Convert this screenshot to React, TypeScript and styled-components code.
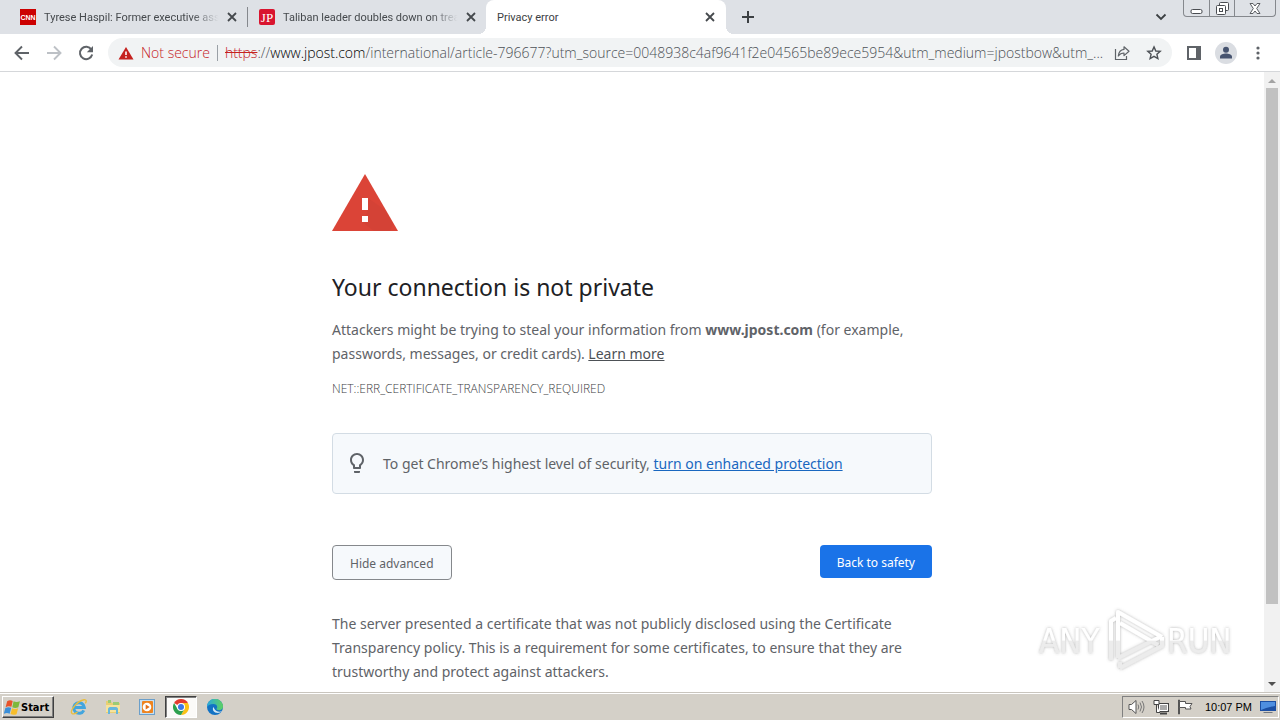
import React from "react";
import styled, { createGlobalStyle, css } from "styled-components";

const GlobalStyle = createGlobalStyle`
  * { box-sizing: border-box; }
  body { margin: 0; background: #fff; font-family: "Noto Sans", "Open Sans", sans-serif; }
  button { font-family: inherit; cursor: pointer; }
  svg { display: block; flex: none; }
`;

const Desktop = styled.div`
  display: flex;
  flex-direction: column;
  height: 100vh;
  overflow: hidden;
`;

const TabStrip = styled.header`
  display: flex;
  align-items: stretch;
  height: 34px;
  flex: none;
  background: #dee1e6;
  padding-left: 8px;
`;

const Tab = styled.div<{ $active?: boolean; $divided?: boolean }>`
  position: relative;
  display: flex;
  align-items: center;
  width: 239px;
  padding: 0 9px 0 12px;
  gap: 8px;
  font-family: Roboto, sans-serif;
  font-size: 11px;
  color: #45494d;
  ${(p) =>
    p.$divided &&
    css`
      &::after {
        content: "";
        position: absolute;
        right: -1px;
        top: 7px;
        width: 1px;
        height: 20px;
        background: #85888d;
      }
    `}
  ${(p) =>
    p.$active &&
    css`
      width: 240px;
      padding: 0 10px 0 11px;
      background: #fff;
      border-radius: 8px 8px 0 0;
      color: #3c4043;
      &::before,
      &::after {
        content: "";
        position: absolute;
        bottom: 0;
        width: 8px;
        height: 8px;
      }
      &::before {
        left: -8px;
        background: radial-gradient(circle at 0 0, #dee1e6 8px, #fff 8px);
      }
      &::after {
        right: -8px;
        background: radial-gradient(circle at 100% 0, #dee1e6 8px, #fff 8px);
      }
    `}
`;

const TabTitle = styled.span<{ $fade?: boolean }>`
  flex: 1;
  margin-right: -6px;
  white-space: nowrap;
  ${(p) => p.$fade && css`mask-image: linear-gradient(to right, #000 82%, transparent 97%);`}
`;

const IconButton = styled.button<{ $size?: number }>`
  display: flex;
  align-items: center;
  justify-content: center;
  flex: none;
  width: ${(p) => p.$size ?? 32}px;
  height: ${(p) => p.$size ?? 32}px;
  padding: 0;
  border: 0;
  background: none;
`;

const NewTab = styled(IconButton)`
  align-self: center;
  margin-left: 6px;
`;

const StripEnd = styled.div`
  display: flex;
  align-items: center;
  margin-left: auto;
  padding-right: 4px;
  gap: 6px;
`;

const WindowButtons = styled.div`
  display: flex;
  align-self: flex-start;
  height: 17px;
  border: 1px solid #85888d;
  border-top: 0;
  border-radius: 0 0 4px 4px;
`;

const WindowButton = styled.button<{ $wide?: boolean }>`
  display: flex;
  align-items: center;
  justify-content: center;
  width: ${(p) => (p.$wide ? 41 : 25)}px;
  padding: 0;
  border: 0;
  background: none;
  & + & { border-left: 1px solid #85888d; }
`;

const Toolbar = styled.nav`
  display: flex;
  align-items: center;
  flex: none;
  height: 38px;
  padding: 0 6px;
  border-bottom: 1px solid #d5d7da;
`;

const AddressBar = styled.div`
  display: flex;
  align-items: center;
  flex: 1;
  min-width: 0;
  height: 29px;
  margin: 0 6px;
  padding: 0 2px 0 10px;
  border-radius: 15px;
  background: #f1f3f4;
  font-family: "Open Sans", sans-serif;
  font-size: 14px;
  font-weight: 300;
`;

const NotSecure = styled.button`
  display: flex;
  align-items: center;
  gap: 7px;
  flex: none;
  padding: 0;
  border: 0;
  background: none;
  font-size: 14px;
  font-weight: 300;
  color: #c5221f;
`;

const AddressDivider = styled.span`
  width: 1px;
  height: 16px;
  margin: 0 7px;
  background: #9aa0a6;
`;

const Url = styled.span`
  flex: 1;
  overflow: hidden;
  white-space: nowrap;
  color: #4d5156;
  s { color: #c5221f; }
  b { font-weight: 300; color: #000; }
`;

const Viewport = styled.div`
  position: relative;
  display: flex;
  flex: 1;
  min-height: 0;
`;

const Page = styled.main`
  flex: 1;
  min-width: 0;
  overflow: hidden;
`;

const Interstitial = styled.div`
  width: 100%;
  max-width: 600px;
  margin: 0 auto;
  padding-top: 102px;
  font-size: 14px;
  line-height: 24px;
  color: #5f6368;
`;

const Heading = styled.h1`
  margin: 40px 0 15px;
  font-size: 23px;
  font-weight: 400;
  line-height: 32px;
  color: #202124;
`;

const Paragraph = styled.p`
  margin: 0;
`;

const TextLink = styled.a<{ $blue?: boolean }>`
  color: ${(p) => (p.$blue ? "#1967c0" : "#4d5156")};
  text-decoration: underline;
`;

const ErrorCode = styled.div`
  margin-top: 14px;
  font-family: "Open Sans", sans-serif;
  font-size: 12px;
  font-weight: 300;
  line-height: 18px;
  color: #3c4043;
`;

const Promo = styled.div`
  display: flex;
  align-items: center;
  gap: 14px;
  margin-top: 35px;
  padding: 18px 12px 17px;
  border: 1px solid #d3dce4;
  border-radius: 4px;
  background: #f6f9fc;
`;

const Actions = styled.div`
  display: flex;
  align-items: flex-start;
  justify-content: space-between;
  margin: 51px 0 32px;
`;

const ActionButton = styled.button<{ $primary?: boolean }>`
  height: ${(p) => (p.$primary ? 33 : 35)}px;
  padding: 1px 17px 0;
  border: ${(p) => (p.$primary ? "0" : "1px solid #85888c")};
  border-radius: 4px;
  background: ${(p) => (p.$primary ? "#1a73e8" : "#f6f9fc")};
  color: ${(p) => (p.$primary ? "#fff" : "#5f6368")};
  font-size: 12px;
`;

const Scrollbar = styled.div`
  display: flex;
  flex-direction: column;
  align-items: center;
  width: 16px;
  flex: none;
  background: #f1f1f1;
`;

const ScrollThumb = styled.div`
  width: 12px;
  flex: 516;
  background: #c1c1c1;
`;

const ScrollTrack = styled.div`
  flex: 72;
`;

const Watermark = styled.svg`
  position: absolute;
  right: 40px;
  bottom: 18px;
  pointer-events: none;
`;

const Taskbar = styled.footer`
  display: flex;
  align-items: center;
  flex: none;
  height: 28px;
  padding: 1px 1px 0 2px;
  border-top: 1px solid #c9c5be;
  background: #d4d0c8;
  box-shadow: inset 0 1px #fff;
  font-family: "DejaVu Sans Condensed", "DejaVu Sans", sans-serif;
`;

const StartButton = styled.button`
  display: flex;
  align-items: center;
  height: 22px;
  width: 52px;
  margin-right: 9px;
  padding: 0 1px;
  border: 1px solid;
  border-color: #fff #404040 #404040 #fff;
  box-shadow: inset -1px -1px #808080;
  background: #d4d0c8;
  font-size: 11px;
  font-weight: 700;
  color: #000;
`;

const TaskButton = styled.button<{ $pressed?: boolean }>`
  display: flex;
  align-items: center;
  justify-content: center;
  width: 32px;
  height: 22px;
  margin-right: 2px;
  padding: 0;
  border: 1px solid transparent;
  background: none;
  ${(p) =>
    p.$pressed &&
    css`
      border-color: #404040 #fff #fff #404040;
      box-shadow: inset 1px 1px #808080;
      background: #fbfaf8;
    `}
`;

const Tray = styled.div`
  display: flex;
  align-items: center;
  gap: 8px;
  height: 22px;
  margin-left: auto;
  padding: 0 2px 0 5px;
  border: 1px solid;
  border-color: #808080 #fff #fff #808080;
  font-family: "Liberation Sans", sans-serif;
  font-size: 11px;
  color: #000;
`;

const Clock = styled.time`
  margin-left: 4px;
`;

const CloseGlyph = () => (
  <svg width="10" height="10" viewBox="0 0 10 10" stroke="#45494d" strokeWidth="1.8">
    <path d="M1 1l8 8M9 1L1 9" />
  </svg>
);

function Favicon({ label, color, serif }: { label: string; color: string; serif?: boolean }) {
  return (
    <svg width="16" height="16" viewBox="0 0 16 16">
      <rect width="16" height="16" rx={serif ? 2 : 0} fill={color} />
      <text
        x="8"
        y={serif ? 13 : 11}
        textAnchor="middle"
        fill="#fff"
        fontSize={serif ? 13 : 7}
        fontWeight={serif ? 400 : 700}
        fontFamily={serif ? "Liberation Serif, serif" : "Liberation Sans, sans-serif"}
      >
        {label}
      </text>
    </svg>
  );
}

const ArrowIcon = ({ forward }: { forward?: boolean }) => (
  <svg width="16" height="16" viewBox="0 0 16 16" fill="none" stroke={forward ? "#bdc1c6" : "#5f6368"} strokeWidth="1.9">
    <path d={forward ? "M1 8h13M8 1.5L14.5 8 8 14.5" : "M15 8H2M8 1.5L1.5 8 8 14.5"} />
  </svg>
);

const ReloadIcon = () => (
  <svg width="16" height="16" viewBox="0 0 16 16">
    <path d="M13.4 4.6A6.2 6.2 0 1 0 14.2 9.6" fill="none" stroke="#5f6368" strokeWidth="2" />
    <path d="M15 1v6.2H8.8z" fill="#5f6368" />
  </svg>
);

const SmallWarning = () => (
  <svg width="16" height="14" viewBox="0 0 16 14">
    <path d="M8 1l7.5 12.5H.5z" fill="#c5221f" />
    <path d="M7.2 5.5h1.6v3.6H7.2zM7.2 10.2h1.6v1.6H7.2z" fill="#fff" />
  </svg>
);

const ShareIcon = () => (
  <svg width="16" height="16" viewBox="0 0 16 16" fill="none" stroke="#5f6368" strokeWidth="1.2">
    <path d="M1.5 4v10.5h11V11" />
    <path d="M10 1.8l5 4.4-5 4.4V8C7.500 8 5.700 9 4.300 11 4.700 7.500 6.500 4.800 10 4.400z" strokeLinejoin="round" />
  </svg>
);

const StarIcon = () => (
  <svg width="16" height="16" viewBox="0 0 16 16" fill="none" stroke="#4d5156" strokeWidth="1.4">
    <path d="M8 1.900l1.800 4.100 4.400.4-3.300 2.900 1 4.300L8 11.300l-3.900 2.300 1-4.300-3.300-2.900 4.400-.4z" />
  </svg>
);

const SidePanelIcon = () => (
  <svg width="16" height="16" viewBox="0 0 16 16">
    <rect x="2" y="2" width="12" height="12" fill="none" stroke="#5f6368" strokeWidth="2" />
    <path d="M10 1h5v14h-5z" fill="#5f6368" />
  </svg>
);

const AvatarIcon = () => (
  <svg width="22" height="22" viewBox="0 0 22 22">
    <circle cx="11" cy="11" r="11" fill="#dadde2" />
    <circle cx="11" cy="7.800" r="3" fill="#46536f" />
    <path d="M5 16.500v-1.700c0-2.200 3.500-3.300 6-3.300s6 1.100 6 3.300v1.700z" fill="#46536f" />
  </svg>
);

const MenuIcon = () => (
  <svg width="4" height="14" viewBox="0 0 4 14" fill="#5f6368">
    <circle cx="2" cy="2" r="1.600" />
    <circle cx="2" cy="7" r="1.600" />
    <circle cx="2" cy="12" r="1.600" />
  </svg>
);

const BulbIcon = () => (
  <svg width="24" height="24" viewBox="0 1 24 24" fill="#5f6368">
    <path d="M9 21c0 .5.4 1 1 1h4c.6 0 1-.5 1-1v-1H9v1zm3-19C8.100 2 5 5.100 5 9c0 2.400 1.200 4.500 3 5.700V17c0 .5.4 1 1 1h6c.6 0 1-.5 1-1v-2.300c1.800-1.300 3-3.400 3-5.700 0-3.900-3.100-7-7-7zm2.900 11.100l-.9.6V16h-4v-2.300l-.9-.6C7.800 12.200 7 10.600 7 9c0-2.800 2.200-5 5-5s5 2.200 5 5c0 1.600-.8 3.200-2.100 4.100z" />
  </svg>
);

const WarningSign = () => (
  <svg width="66" height="57" viewBox="0 0 66 57" role="img" aria-label="Warning">
    <path d="M33 0l33 57H0z" fill="#db4437" />
    <path d="M36 24l17 12 8 14-3 7H42l-12-9 6-12z" fill="#c53f34" opacity=".3" />
    <path d="M30 24h6v12h-6zM30 42h6v6h-6z" fill="#fff" />
  </svg>
);

const ScrollArrow = ({ down }: { down?: boolean }) => (
  <svg width="16" height="16" viewBox="0 0 16 16">
    <path d={down ? "M4 6h8l-4 4z" : "M4 11h8L8 7z"} fill={down ? "#505050" : "#a3a3a3"} />
  </svg>
);

const AnyRunLogo = () => (
  <Watermark width="204" height="68" viewBox="0 0 204 68" role="img" aria-label="ANY RUN">
    <defs>
      <filter id="glow" x="-10%" y="-10%" width="120%" height="120%">
        <feDropShadow dx="0" dy="0" stdDeviation="1.800" floodColor="#666" floodOpacity="0.5" />
      </filter>
      <linearGradient id="fade" x1="0" y1="0" x2="0" y2="68" gradientUnits="userSpaceOnUse">
        <stop offset="0.500" stopColor="#fff" />
        <stop offset="0.520" stopColor="#ececec" />
      </linearGradient>
    </defs>
    <g filter="url(#glow)">
      <g fill="url(#fade)" fontFamily="DejaVu Sans Condensed, DejaVu Sans, sans-serif" fontSize="33">
        <text x="3" y="47">ANY</text>
        <text x="131" y="47">RUN</text>
      </g>
      <g fill="none" stroke="url(#fade)" strokeWidth="4" strokeLinejoin="round">
        <path d="M75 54V15l5-3" />
        <path d="M82 44V6l44 25" />
        <path d="M84 17l38 22M82 52l42-21M84 62l42-22V31" />
        <path d="M82 44v8M84 56v6" />
      </g>
    </g>
  </Watermark>
);

const WindowsFlag = () => (
  <svg width="17" height="17" viewBox="0 0 16 16">
    <path d="M3 2C5 .8 6.500 1 8.200 1.800L7 7.400C5.200 6.600 3.500 6.600 1.500 7.700z" fill="#e8532b" />
    <path d="M9 2.200c1.700.9 3.700 1 6 0l-1.500 5.600c-2 .9-3.900.8-5.700 0z" fill="#7db83c" />
    <path d="M1.300 8.500c1.900-1 3.600-1 5.500-.2l-1.500 5.500C3.500 13 1.800 13-.2 14z" fill="#3c8fd8" />
    <path d="M7.600 8.700c1.800.9 3.700.9 5.700.1l-1.500 5.500c-2 .8-3.900.7-5.700-.1z" fill="#f7be2c" />
  </svg>
);

const IeIcon = () => (
  <svg width="18" height="18" viewBox="0 0 18 18" fill="none">
    <path d="M13.800 12.300A5.300 5.300 0 1 1 14.300 9.500H5" stroke="#42a5de" strokeWidth="3" />
    <path d="M2 15.500C-.5 13 7 3 14 1.800c3-.4 2.300 2.200 1.300 3.600M2 15.500c1.400 1 4-.3 5.500-1.400" stroke="#e9bd3e" strokeWidth="1.400" />
  </svg>
);

const FolderIcon = () => (
  <svg width="18" height="18" viewBox="0 0 18 18">
    <path d="M2 3h5l1 2h8v10H2z" fill="#e9cf73" />
    <path d="M4 2h3v3H4zM9 4h6v3H9z" fill="#9ccb74" />
    <path d="M2 7h14v7H2z" fill="#f6e39c" />
    <path d="M4 16v-5c0-1 1-2 2-2h6c1 0 2 1 2 2v5h-2v-4H6v4z" fill="#67b7dc" />
  </svg>
);

const MediaIcon = () => (
  <svg width="16" height="16" viewBox="0 0 16 16">
    <rect x=".5" y=".5" width="15" height="15" fill="#c7e0f2" stroke="#6b9fca" />
    <rect x="3" y="2" width="11" height="12" rx="1" fill="#ee8420" />
    <circle cx="8" cy="8" r="4.300" fill="#fff" />
    <path d="M6.700 5.500L10.700 8l-4 2.500z" fill="#e2701a" />
  </svg>
);

const ChromeIcon = () => (
  <svg width="16" height="16" viewBox="0 0 16 16">
    <path d="M8 8L1.070 4A8 8 0 0 1 14.930 4z" fill="#e33b2e" />
    <path d="M8 4h6.930A8 8 0 0 1 8 16l3.460-6z" fill="#fbc116" />
    <path d="M1.070 4A8 8 0 0 0 8 16l3.460-6L8 8 4.540 10z" fill="#2da04e" />
    <circle cx="8" cy="8" r="4" fill="#fff" />
    <circle cx="8" cy="8" r="3" fill="#3b78e7" />
  </svg>
);

const EdgeIcon = () => (
  <svg width="16" height="16" viewBox="0 0 16 16">
    <defs>
      <linearGradient id="edgeTop" x1="0" y1="0" x2="1" y2="0">
        <stop offset="0" stopColor="#2aa8dd" />
        <stop offset="1" stopColor="#5ed160" />
      </linearGradient>
    </defs>
    <circle cx="8" cy="8" r="8" fill="#1272c4" />
    <path d="M0 8a8 8 0 0 1 16-.5c0 2.500-2 3.700-4 3.700-1.600 0-2.600-.6-2.600-1.200 0-.5.8-.8.8-2 0-1.800-1.700-3-3.700-3C3 5 .4 6.500 0 8z" fill="url(#edgeTop)" />
    <path d="M6.500 8c-1.300 1.500-.8 5 3 5.800 2.200.4 4.200-.4 5.300-1.500-2.600 1-6.800.3-8.300-4.300z" fill="#d4e8f4" />
  </svg>
);

const SpeakerIcon = () => (
  <svg width="17" height="16" viewBox="0 0 17 16" stroke="#555">
    <path d="M1 5.500h2.500L8 1.500v13l-4.500-4H1z" fill="#fff" />
    <path d="M10 5.500q1.500 2.500 0 5M12 3.500q3 4.500 0 9M14 2q4 6 0 12" fill="none" stroke="#777" />
  </svg>
);

const NetworkIcon = () => (
  <svg width="16" height="16" viewBox="0 0 16 16">
    <rect x="5.500" y="4.500" width="10" height="8" fill="#aaa" stroke="#444" />
    <path d="M6.500 5.500h8v6h-8z" fill="none" stroke="#fff" />
    <path d="M7 14.500h7" stroke="#444" strokeWidth="2" />
    <path d="M1 1.500h5v4H1zM3.500 5.500v8H7" fill="#fff" stroke="#444" />
  </svg>
);

const FlagIcon = () => (
  <svg width="16" height="16" viewBox="0 0 16 16" fill="#fff" stroke="#555">
    <path d="M1.500 1v14h1V1z" />
    <path d="M2.500 2.500h6v2H15l-2 3 1 2.500H8.500v-1.500h-6z" />
  </svg>
);

const DesktopIcon = () => (
  <svg width="16" height="14" viewBox="0 0 16 14">
    <path d="M0 1h16v10H0z" fill="#1c4fa3" />
    <path d="M1 2h14v4Q7 7 1 10z" fill="#4f8fe0" />
    <path d="M4 12h8l1 1H3z" fill="#6f7680" />
  </svg>
);

export default function App() {
  return (
    <Desktop>
      <GlobalStyle />
      <TabStrip>
        <Tab $divided>
          <Favicon label="CNN" color="#cc0000" />
          <TabTitle $fade>Tyrese Haspil: Former executive assi</TabTitle>
          <IconButton $size={12} aria-label="Close tab"><CloseGlyph /></IconButton>
        </Tab>
        <Tab>
          <Favicon label="JP" color="#d9142f" serif />
          <TabTitle $fade>Taliban leader doubles down on treat</TabTitle>
          <IconButton $size={12} aria-label="Close tab"><CloseGlyph /></IconButton>
        </Tab>
        <Tab $active>
          <TabTitle>Privacy error</TabTitle>
          <IconButton $size={12} aria-label="Close tab"><CloseGlyph /></IconButton>
        </Tab>
        <NewTab aria-label="New tab">
          <svg width="12" height="12" viewBox="0 0 12 12" stroke="#3c4043" strokeWidth="2"><path d="M6 0v12M0 6h12" /></svg>
        </NewTab>
        <StripEnd>
          <IconButton aria-label="Search tabs">
            <svg width="12" height="8" viewBox="0 0 12 8" fill="none" stroke="#3c4043" strokeWidth="1.800"><path d="M1.500 1.500L6 6l4.500-4.500" /></svg>
          </IconButton>
          <WindowButtons>
            <WindowButton aria-label="Minimize">
              <svg width="13" height="13" viewBox="0 0 13 13"><rect x="1" y="7.500" width="11" height="4" rx="1.500" fill="#fff" stroke="#4a4d52" /></svg>
            </WindowButton>
            <WindowButton aria-label="Restore">
              <svg width="13" height="13" viewBox="0 0 13 13" fill="#fff" stroke="#4a4d52">
                <rect x="3.500" y=".5" width="9" height="8" rx="1" />
                <rect x=".5" y="3.500" width="9" height="9" rx="1" />
                <rect x="3.500" y="6.500" width="3" height="3" />
              </svg>
            </WindowButton>
            <WindowButton $wide aria-label="Close">
              <svg width="12" height="11" viewBox="0 0 12 11" fill="#fff" stroke="#5a5d62">
                <path d="M1 .500h3l2 2.500L8 .500h3L7.700 5.500l3.300 5H8L6 8l-2 2.500H1l3.300-5z" />
              </svg>
            </WindowButton>
          </WindowButtons>
        </StripEnd>
      </TabStrip>
      <Toolbar>
        <IconButton aria-label="Back"><ArrowIcon /></IconButton>
        <IconButton aria-label="Forward"><ArrowIcon forward /></IconButton>
        <IconButton aria-label="Reload"><ReloadIcon /></IconButton>
        <AddressBar>
          <NotSecure><SmallWarning />Not secure</NotSecure>
          <AddressDivider />
          <Url><s>https</s>://<b>www.jpost.com</b>/international/article-796677?utm_source=0048938c4af9641f2e04565be89ece5954&amp;utm_medium=jpostbow&amp;utm_...</Url>
          <IconButton aria-label="Share"><ShareIcon /></IconButton>
          <IconButton aria-label="Bookmark"><StarIcon /></IconButton>
        </AddressBar>
        <IconButton aria-label="Side panel"><SidePanelIcon /></IconButton>
        <IconButton aria-label="Profile"><AvatarIcon /></IconButton>
        <IconButton aria-label="Menu"><MenuIcon /></IconButton>
      </Toolbar>
      <Viewport>
        <Page>
          <Interstitial>
            <WarningSign />
            <Heading>Your connection is not private</Heading>
            <Paragraph>
              Attackers might be trying to steal your information from <strong>www.jpost.com</strong> (for example,
              passwords, messages, or credit cards). <TextLink href="#">Learn more</TextLink>
            </Paragraph>
            <ErrorCode>NET::ERR_CERTIFICATE_TRANSPARENCY_REQUIRED</ErrorCode>
            <Promo>
              <BulbIcon />
              <Paragraph>
                To get Chrome’s highest level of security, <TextLink $blue href="#">turn on enhanced protection</TextLink>
              </Paragraph>
            </Promo>
            <Actions>
              <ActionButton>Hide advanced</ActionButton>
              <ActionButton $primary>Back to safety</ActionButton>
            </Actions>
            <Paragraph>
              The server presented a certificate that was not publicly disclosed using the Certificate Transparency
              policy. This is a requirement for some certificates, to ensure that they are trustworthy and protect
              against attackers.
            </Paragraph>
          </Interstitial>
        </Page>
        <Scrollbar>
          <ScrollArrow />
          <ScrollThumb />
          <ScrollTrack />
          <ScrollArrow down />
        </Scrollbar>
        <AnyRunLogo />
      </Viewport>
      <Taskbar>
        <StartButton><WindowsFlag />Start</StartButton>
        <TaskButton aria-label="Internet Explorer"><IeIcon /></TaskButton>
        <TaskButton aria-label="Windows Explorer"><FolderIcon /></TaskButton>
        <TaskButton aria-label="Media Player"><MediaIcon /></TaskButton>
        <TaskButton $pressed aria-label="Chrome"><ChromeIcon /></TaskButton>
        <TaskButton aria-label="Edge"><EdgeIcon /></TaskButton>
        <Tray>
          <SpeakerIcon />
          <NetworkIcon />
          <FlagIcon />
          <Clock>10:07 PM</Clock>
          <DesktopIcon />
        </Tray>
      </Taskbar>
    </Desktop>
  );
}
